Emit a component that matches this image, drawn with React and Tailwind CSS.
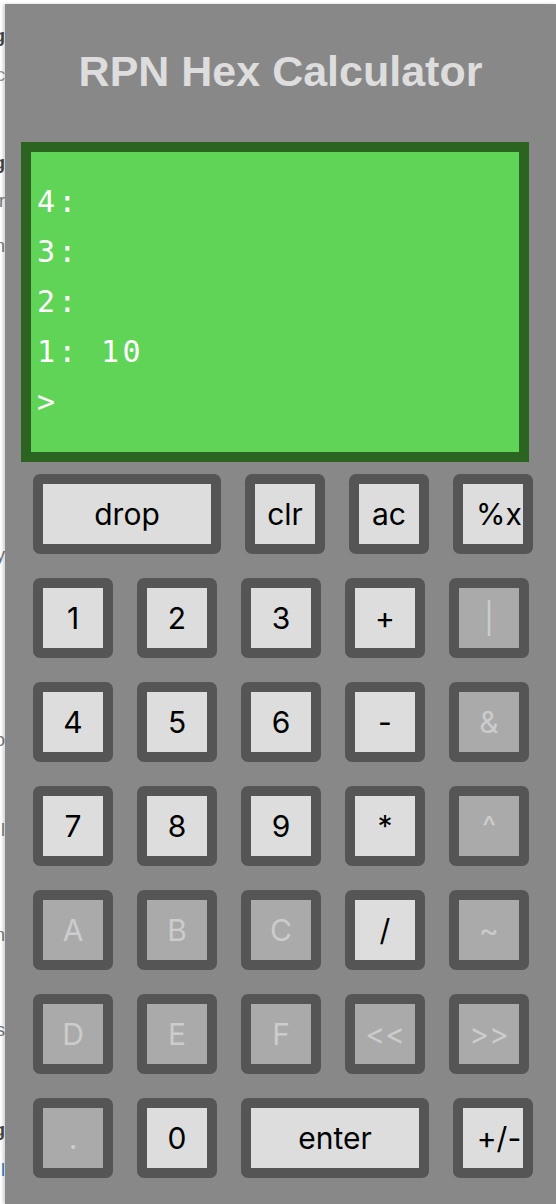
import React from "react";

const rows = [
  [
    { l: "drop", w: true },
    { l: "clr" },
    { l: "ac" },
    { l: "%x", s: true },
  ],
  [{ l: "1" }, { l: "2" }, { l: "3" }, { l: "+" }, { l: "|", d: true }],
  [{ l: "4" }, { l: "5" }, { l: "6" }, { l: "-" }, { l: "&", d: true }],
  [{ l: "7" }, { l: "8" }, { l: "9" }, { l: "*" }, { l: "^", d: true }],
  [
    { l: "A", d: true },
    { l: "B", d: true },
    { l: "C", d: true },
    { l: "/" },
    { l: "~", d: true },
  ],
  [
    { l: "D", d: true },
    { l: "E", d: true },
    { l: "F", d: true },
    { l: "<<", d: true },
    { l: ">>", d: true },
  ],
  [
    { l: ".", d: true },
    { l: "0" },
    { l: "enter", w: true },
    { l: "+/-", s: true },
  ],
];

function Key({ k }) {
  return (
    <div
      className={`${k.w ? "w-[188px]" : "w-20"} h-20 shrink-0 rounded-[7px] border-[10px] border-[#555555] flex items-center justify-center ${
        k.d ? "bg-[#aaaaaa] text-[#cccccc]" : "bg-[#dddddd] text-black"
      }`}
      style={{ fontFamily: "Inter, 'Liberation Sans', sans-serif" }}
    >
      <span className={`text-[30px] leading-none whitespace-nowrap ${k.s ? "pl-[12px]" : ""}`}>{k.l}</span>
    </div>
  );
}

const frags = [
  { h: 39, t: "ng", c: "text-[#444] font-bold" },
  { h: 88, t: "c", c: "text-[#999]" },
  { h: 38, t: "g", c: "text-[#444] font-bold" },
  { h: 45, t: "r", c: "text-[#777]" },
  { h: 309, t: "n", c: "text-[#777]" },
  { h: 185, t: "y", c: "text-[#777]" },
  { h: 90, t: "o", c: "text-[#777]" },
  { h: 105, t: "l", c: "text-[#777]" },
  { h: 95, t: "n", c: "text-[#777]" },
  { h: 100, t: "s", c: "text-[#777]" },
  { h: 40, t: "g", c: "text-[#444] font-bold" },
  { h: 20, t: "l", c: "text-[#2a7ac0]" },
];

export default function App() {
  return (
    <div className="flex w-[556px] h-[1204px] overflow-hidden bg-white">
      <div
        className="w-[5px] shrink-0 overflow-hidden flex flex-col pt-[27px]"
        style={{ fontFamily: "'Liberation Sans', Arial, sans-serif" }}
      >
        {frags.map((f, i) => (
          <div key={i} className="flex justify-end shrink-0" style={{ height: f.h }}>
            <span className={`text-[18px] leading-[18px] whitespace-nowrap ${f.c}`}>{f.t}</span>
          </div>
        ))}
      </div>
      <div className="mt-[4px] flex-1 bg-[#888888] shadow-[-2px_0_3px_rgba(0,0,0,0.18)] flex flex-col">
        <div
          className="mt-[46px] text-center text-[43px] leading-[43px] font-bold text-[#dddddd] whitespace-nowrap"
          style={{ fontFamily: "'Liberation Sans', Arial, sans-serif" }}
        >
          RPN Hex Calculator
        </div>
        <div
          className="ml-[16px] mt-[49px] w-[508px] h-[320px] border-[10px] border-[#2b6420] bg-[#60d457] py-[25px] pl-[6px] text-white text-[30px] leading-[50px] tracking-[3.3px] whitespace-pre"
          style={{ fontFamily: "'DejaVu Sans Mono', monospace" }}
        >
          <div>4:</div>
          <div>3:</div>
          <div>2:</div>
          <div>1: 10</div>
          <div>&gt;</div>
        </div>
        <div className="ml-[28px] mt-[12px] flex flex-col gap-6">
          {rows.map((r, i) => (
            <div key={i} className="flex gap-6">
              {r.map((k, j) => (
                <Key key={j} k={k} />
              ))}
            </div>
          ))}
        </div>
      </div>
    </div>
  );
}
